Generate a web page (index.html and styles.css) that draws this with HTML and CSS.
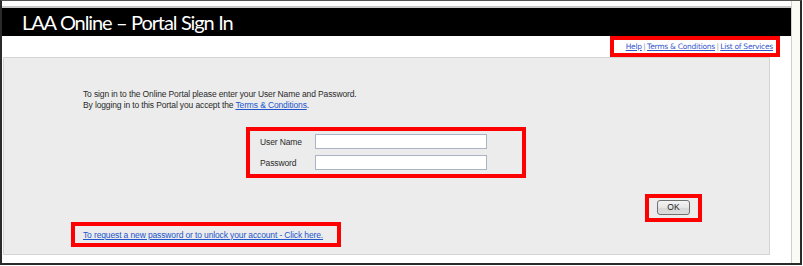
FILE: index.html
```html
<!DOCTYPE html>
<html lang="en">
<head>
<meta charset="utf-8">
<title>LAA Online – Portal Sign In</title>
<link rel="stylesheet" href="styles.css">
</head>
<body>
<div class="window">
  <div class="main">
    <div class="topgap"></div>
    <div class="header"><h1 class="title">LAA Online – Portal Sign In</h1></div>
    <div class="linkbar">
      <div class="mark mark-links">
        <a href="#" class="toplink">Help</a><span class="sep">|</span><a href="#" class="toplink">Terms &amp; Conditions</a><span class="sep">|</span><a href="#" class="toplink">List of Services</a>
      </div>
    </div>
    <div class="panel">
      <p class="intro">To sign in to the Online Portal please enter your User Name and Password.<br>By logging in to this Portal you accept the <a href="#" class="blink">Terms &amp; Conditions</a>.</p>
      <div class="mark mark-form">
        <div class="row"><label class="lbl" for="u">User Name</label><input id="u" class="field" type="text"></div>
        <div class="row"><label class="lbl" for="p">Password</label><input id="p" class="field" type="password"></div>
      </div>
      <div class="mark mark-ok"><button class="okbtn" type="button">OK</button></div>
      <div class="mark mark-reset"><a href="#" class="blink">To request a new password or to unlock your account - Click here.</a></div>
    </div>
  </div>
  <div class="side"></div>
</div>
</body>
</html>
```

FILE: styles.css
```css
html, body { margin: 0; padding: 0; background: #fff; }
body { width: 803px; height: 266px; overflow: hidden; }

.window {
  box-sizing: border-box;
  width: 802px;
  height: 265px;
  display: flex;
  border-top: 1px solid #555;
  border-left: 2px solid #2a2a2a;
  border-right: 2px solid #2a2a2a;
  border-bottom: 2px solid #2a2a2a;
  background: #fff;
}

.main { width: 789px; display: flex; flex-direction: column; }
.side { flex: 1; border-left: 1px solid #d0d0d0; background: #fbfbf6; }

.topgap { height: 5px; border-bottom: 2px solid #c8c8c8; }

.header { height: 28px; background: #000; padding-left: 20px; }
.title {
  margin: 0;
  font-family: Lato, "Open Sans", sans-serif;
  font-weight: 400;
  font-size: 20px;
  line-height: 28px;
  color: #fff;
  letter-spacing: -1.1px;
  word-spacing: 0.5px;
}

.linkbar { height: 21px; display: flex; justify-content: flex-end; padding-right: 11px; }
.mark { border: 4px solid #ff0000; box-sizing: border-box; }
.mark-links {
  width: 170px;
  height: 21px;
  background: #fff;
  display: flex;
  align-items: center;
  justify-content: flex-end;
  padding-right: 3px;
  white-space: nowrap;
  font-family: "DejaVu Sans", Verdana, sans-serif;
  font-size: 7.5px;
  letter-spacing: -0.25px;
}
.toplink { color: #3355cc; text-decoration: underline; }
.sep { color: #999; margin: 0 1.5px; }

.panel {
  box-sizing: border-box;
  margin-left: 1px;
  width: 767px;
  height: 198px;
  background: #ececec;
  border: 1px solid #d4d4d4;
  padding-top: 31px;
  font-family: "Liberation Sans", Arial, sans-serif;
  font-size: 8.5px;
  letter-spacing: -0.13px;
  color: #2a2a2a;
}

.intro { margin: 0 0 0 79px; line-height: 11px; }
.blink { color: #2255cc; text-decoration: underline; }

.mark-form {
  margin: 16px 0 0 242px;
  width: 280px;
  height: 51px;
  padding: 3px 0 0 10px;
  display: flex;
  flex-direction: column;
  gap: 6px;
}
.row { display: flex; align-items: center; height: 15px; }
.lbl { width: 55px; }
.field {
  box-sizing: border-box;
  width: 172px;
  height: 15px;
  margin: 0;
  padding: 0 2px;
  border: 1px solid #aab3c2;
  background: #fff;
  font-size: 8px;
}

.mark-ok {
  margin: 16px 0 0 641px;
  width: 57px;
  height: 28px;
  padding: 2px 0 0 8px;
}
.okbtn {
  box-sizing: border-box;
  width: 33px;
  height: 15px;
  margin: 0;
  padding: 0;
  border: 1px solid #707070;
  border-radius: 3px;
  background: linear-gradient(#f4f4f4, #e6e6e6 50%, #d8d8d8 51%, #dcdcdc);
  font-family: "Liberation Sans", Arial, sans-serif;
  font-size: 8.5px;
  color: #222;
  line-height: 13px;
}

.mark-reset {
  margin-left: 67px;
  width: 270px;
  height: 25px;
  padding-left: 8px;
  display: flex;
  align-items: center;
  white-space: nowrap;
}
```
